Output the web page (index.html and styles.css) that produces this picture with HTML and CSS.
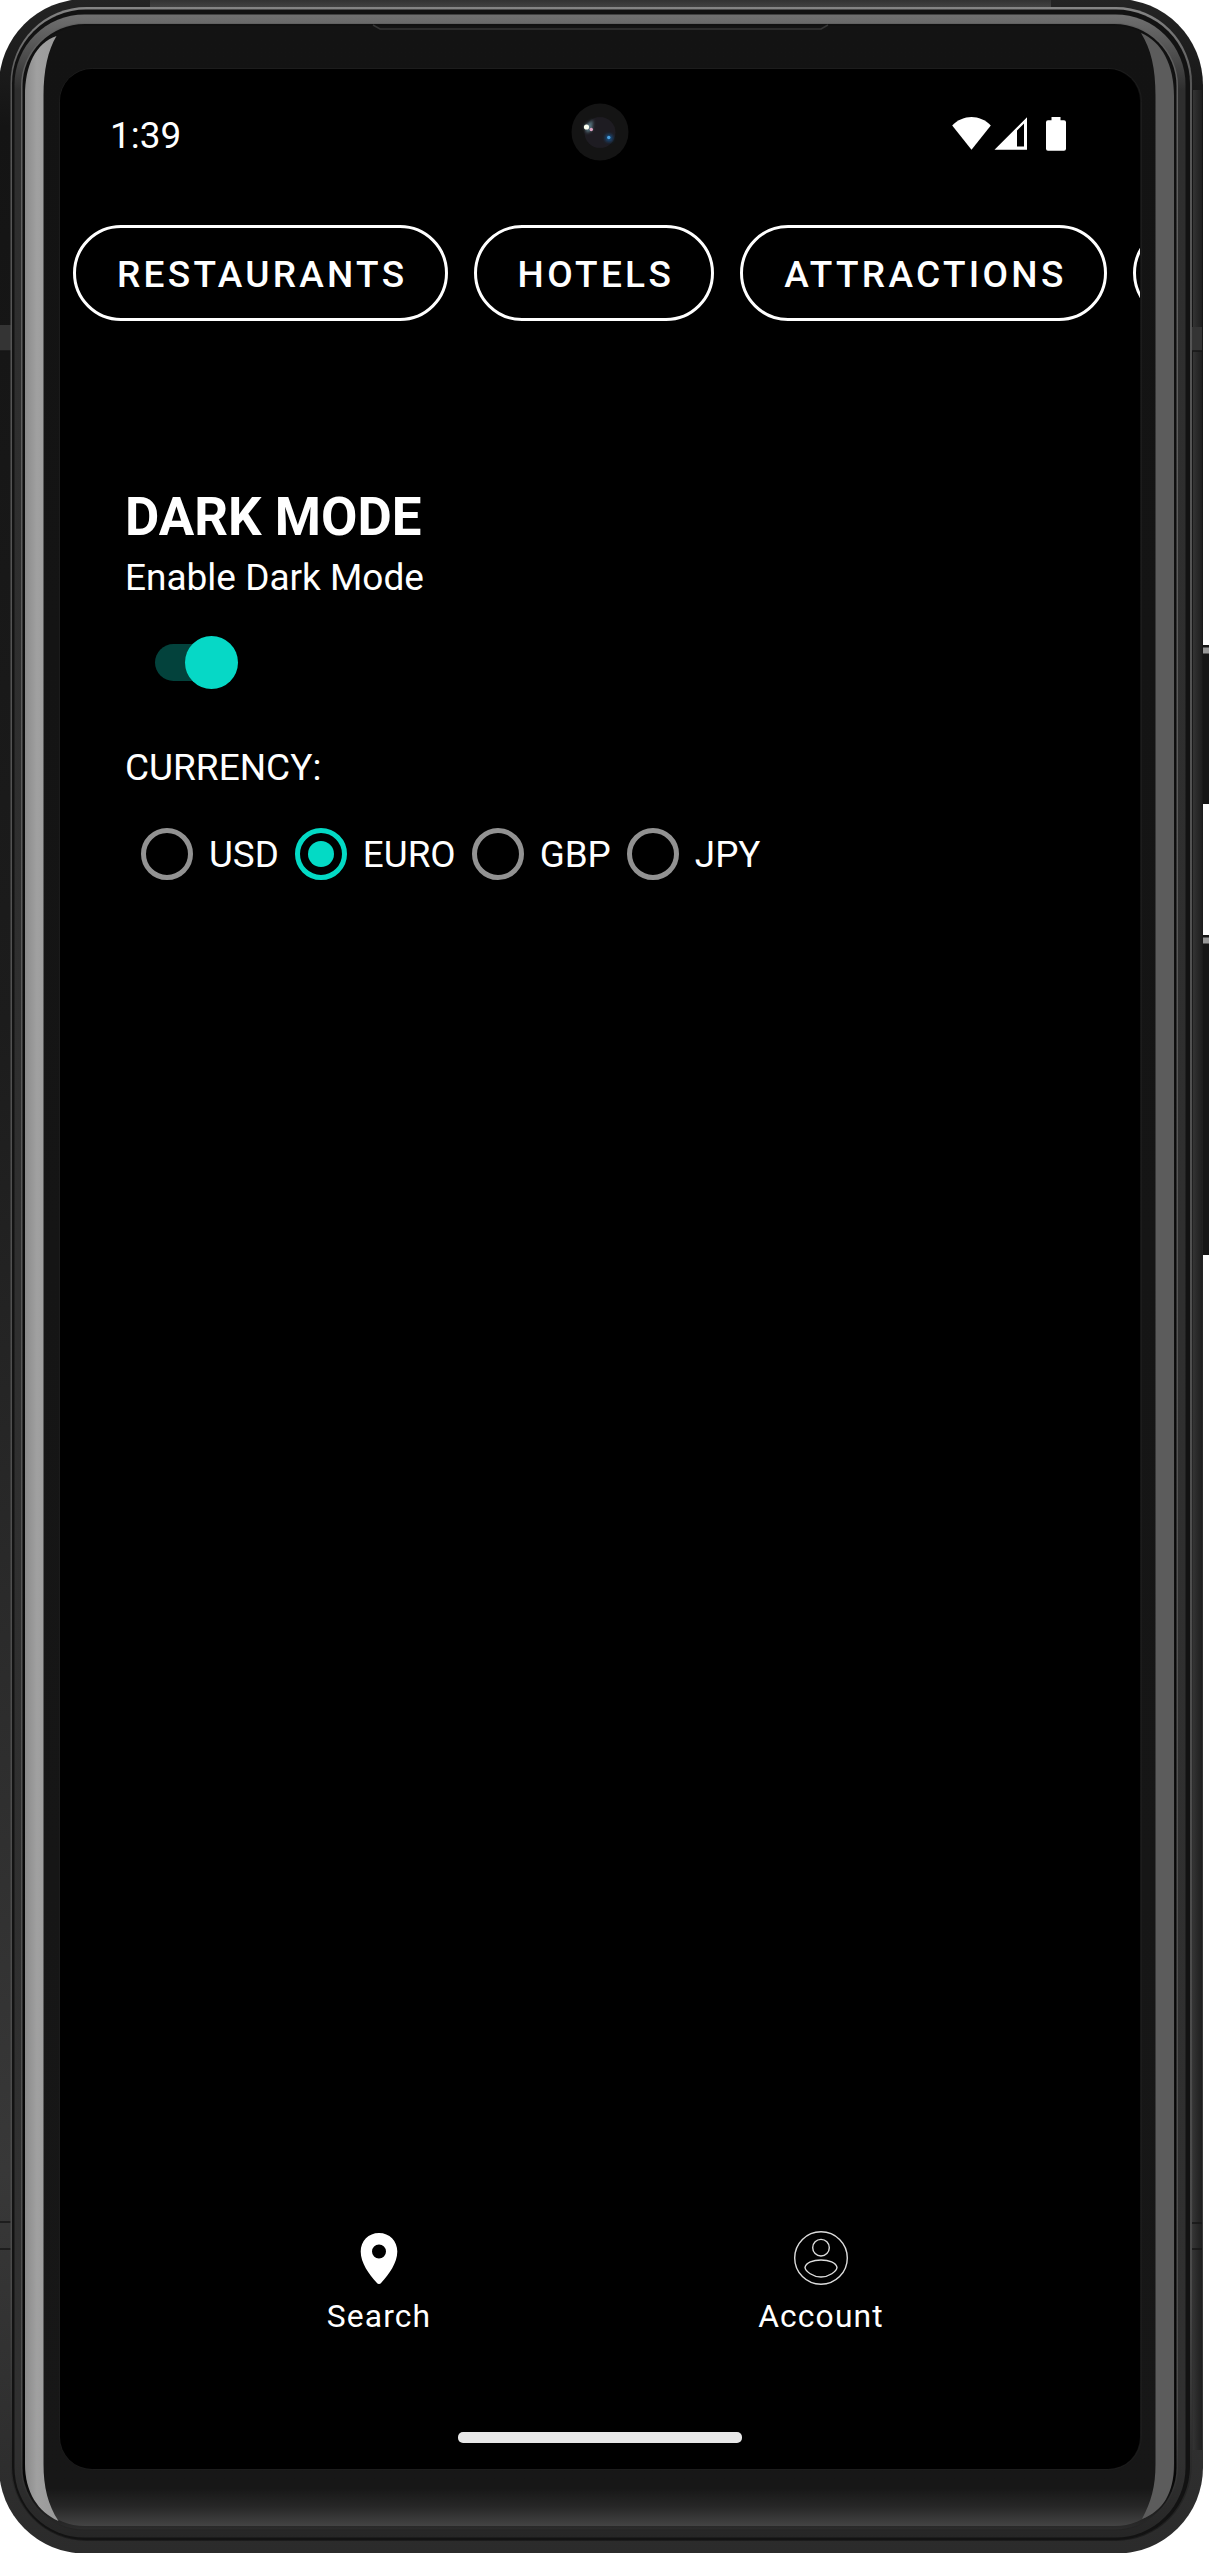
FILE: index.html
```html
<!DOCTYPE html>
<html lang="en">
<head>
<meta charset="utf-8">
<title>Settings</title>
<link rel="stylesheet" href="styles.css">
</head>
<body>
<div class="device">
  <svg class="frame" width="1209" height="2553" viewBox="0 0 1209 2553" aria-hidden="true">
    <defs>
      <linearGradient id="shell" x1="0" y1="0" x2="0" y2="1">
        <stop offset="0" stop-color="#242424"/><stop offset=".05" stop-color="#141414"/><stop offset=".4" stop-color="#1c1c1c"/><stop offset=".85" stop-color="#383838"/><stop offset="1" stop-color="#2b2b2b"/>
      </linearGradient>
      <linearGradient id="edge" x1="0" y1="0" x2="0" y2="1">
        <stop offset="0" stop-color="#858585"/><stop offset=".03" stop-color="#565656"/><stop offset=".9" stop-color="#4a4a4a"/><stop offset="1" stop-color="#1c1c1c"/>
      </linearGradient>
      <linearGradient id="band" x1="0" y1="0" x2="0" y2="1">
        <stop offset="0" stop-color="#707070"/><stop offset=".008" stop-color="#606060"/><stop offset=".03" stop-color="#2e2e2e"/><stop offset=".97" stop-color="#303030"/><stop offset="1" stop-color="#262626"/>
      </linearGradient>
      <linearGradient id="lip" x1="0" y1="0" x2="0" y2="1">
        <stop offset="0" stop-color="#606060"/><stop offset=".95" stop-color="#4c4c4c"/><stop offset="1" stop-color="#242424"/>
      </linearGradient>
      <linearGradient id="gap" x1="0" y1="0" x2="0" y2="1">
        <stop offset="0" stop-color="#101010"/><stop offset=".98" stop-color="#060606"/><stop offset="1" stop-color="#2c2c2c"/>
      </linearGradient>
      <linearGradient id="glass" x1="0" y1="0" x2="0" y2="1">
        <stop offset="0" stop-color="#131313"/><stop offset=".985" stop-color="#171717"/><stop offset=".992" stop-color="#262626"/><stop offset="1" stop-color="#444"/>
      </linearGradient>
      <linearGradient id="silver" x1="0" y1="0" x2="1" y2="0">
        <stop offset="0" stop-color="#8a8a8a"/><stop offset=".35" stop-color="#a0a0a0"/><stop offset="1" stop-color="#999"/>
      </linearGradient>
      <linearGradient id="rail" x1="0" y1="0" x2="1" y2="0">
        <stop offset="0" stop-color="#333"/><stop offset="1" stop-color="#1e1e1e"/>
      </linearGradient>
      <linearGradient id="topbar" x1="0" y1="0" x2="0" y2="1">
        <stop offset="0" stop-color="#333"/><stop offset="1" stop-color="#444"/>
      </linearGradient>
    </defs>
    <rect x="1200" y="645" width="12" height="159" fill="#161616"/>
    <rect x="1202" y="647.500" width="7" height="6" fill="#999"/>
    <rect x="1200" y="935" width="12" height="320" fill="#161616"/>
    <rect x="1202" y="937.500" width="7" height="6" fill="#999"/>
    <rect x="-1" y="-1" width="1204" height="2554.500" rx="86" fill="url(#shell)"/>
    <rect x="1193" y="90" width="9" height="2360" fill="url(#rail)"/>
    <rect x="150" y="0" width="901" height="8" fill="url(#topbar)"/>
    <path d="M0 325h11v26H0zM1190 327h12v24h-12z" fill="#343434"/>
    <path d="M0 351h11M1190 351h12M0 2222h11M0 2249h11M1190 2223h12M1190 2249h12" stroke="#161616" stroke-width="1.500"/>
    <rect x="10.500" y="7" width="1181.500" height="2534" rx="76" fill="url(#edge)"/>
    <rect x="12" y="9.500" width="1178" height="2530.500" rx="74" fill="#121212"/>
    <rect x="14.500" y="14.500" width="1171" height="2523" rx="70" fill="url(#band)"/>
    <rect x="21" y="23" width="1157" height="2507.500" rx="63" fill="url(#lip)"/>
    <rect x="22.500" y="24" width="1154" height="2505.500" rx="62" fill="url(#gap)"/>
    <rect x="25" y="26" width="1149.500" height="2500" rx="60" fill="url(#glass)"/>
    <path d="M56.500 36C36 43 25 65 25 96V2464C25 2492 38 2512 58.500 2521C48 2505 43.500 2487 43.500 2464V96C43.500 70 48 50 56.500 36Z" fill="url(#silver)"/>
    <path d="M1141 33C1162 42 1174 65 1174 96V2464C1174 2493 1163 2511 1142 2519C1151 2502 1155.500 2487 1155.500 2464V96C1155.500 68 1151 49 1141 33Z" fill="#5c5c5c"/>
    <path d="M373 25l7 4H821l7-4" fill="none" stroke="#343434" stroke-width="1.500"/>
    <rect x="59.500" y="68.500" width="1082" height="2401" rx="33" fill="none" stroke="#1c1c1c"/>
  </svg>

  <main class="screen">
    <header class="status">
      <span class="clock">1:39</span>
      <svg class="camera" width="58" height="58" viewBox="0 0 58 58" aria-hidden="true">
        <defs>
          <filter id="glow" x="-1" y="-1" width="3" height="3"><feGaussianBlur stdDeviation="1.700"/></filter>
        </defs>
        <circle cx="29" cy="29" r="28.500" fill="#141414"/>
        <circle cx="29" cy="29.500" r="15.500" fill="#1e1c22"/>
        <path d="M13 23L22 17L21 27L16 30Z" fill="#587580" filter="url(#glow)"/>
        <circle cx="38" cy="35" r="4" fill="#174570" filter="url(#glow)"/>
        <circle cx="15.500" cy="24" r="2.600" fill="#fbfff0"/>
        <circle cx="20.300" cy="26.500" r="1.700" fill="#e0a5c4"/>
        <circle cx="37.800" cy="34.500" r="1.700" fill="#4aa0e0"/>
      </svg>
      <svg class="indicators" width="116" height="36" viewBox="0 0 116 36" fill="#fff" aria-hidden="true">
        <path d="M.2 9.500C11-2 28-2 38.800 9.500L19.500 33.700Z"/>
        <path fill-rule="evenodd" d="M42.500 33.700L75 1.200V33.700ZM65 14.500V30.500H72V7.500Z"/>
        <path d="M99.500 1h9v3.300h3.500a2 2 0 0 1 2 2V32.700a2 2 0 0 1-2 2h-16a2 2 0 0 1-2-2V6.300a2 2 0 0 1 2-2h3.500z"/>
      </svg>
    </header>

    <nav class="chips">
      <button class="chip">RESTAURANTS</button>
      <button class="chip">HOTELS</button>
      <button class="chip">ATTRACTIONS</button>
      <button class="chip"></button>
    </nav>

    <section class="settings">
      <h1 class="title">DARK MODE</h1>
      <p class="label">Enable Dark Mode</p>
      <div class="switch"><span class="thumb"></span></div>
      <p class="label currency">CURRENCY:</p>
      <div class="options">
        <label class="option"><span class="radio"></span>USD</label>
        <label class="option"><span class="radio checked"></span>EURO</label>
        <label class="option"><span class="radio"></span>GBP</label>
        <label class="option"><span class="radio"></span>JPY</label>
      </div>
    </section>

    <nav class="tabs">
      <a class="tab">
        <svg width="56" height="56" viewBox="0 0 56 56" aria-hidden="true"><path fill="#fff" fill-rule="evenodd" d="M28 3C17.500 3 9.700 11 9.700 21.500C9.700 33 18 44 25.500 52.500Q28 55.500 30.500 52.500C38 44 46.300 33 46.300 21.500C46.300 11 38.500 3 28 3ZM28 14.500a7 7 0 1 1 0 14a7 7 0 0 1 0-14Z"/></svg>
        <span>Search</span>
      </a>
      <a class="tab">
        <svg width="56" height="56" viewBox="0 0 56 56" fill="none" stroke="#ddd" stroke-width="1.400" aria-hidden="true"><circle cx="28" cy="28" r="26.300"/><circle cx="28" cy="17.700" r="8.300"/><path d="M12 37.500C13 32.500 20 30 28 30S43 32.500 44 37.500C43.500 41.500 36 47 28 47S12.500 41.500 12 37.500Z"/></svg>
        <span>Account</span>
      </a>
    </nav>
    <div class="home"></div>
  </main>
</div>
</body>
</html>
```
FILE: styles.css
```css
* { box-sizing: border-box; }
body { margin: 0; background: #fff; font-family: Roboto, sans-serif; color: #fff; }
h1, p { margin: 0; font-weight: 400; }

.device { position: relative; width: 1209px; height: 2553px; padding: 69px 0 0 60px; overflow: hidden; }
.frame { position: absolute; left: 0; top: 0; }

.screen { position: relative; display: flex; flex-direction: column; width: 1080px; height: 2400px; border-radius: 32px; background: #000; overflow: hidden; }

.status { display: grid; grid-template-columns: 1fr 58px 1fr; align-items: center; height: 125px; padding: 0 72px 0 50px; flex: none; }
.clock { font-size: 36.9px; line-height: 44px; padding-top: 8px; }
.camera { position: relative; left: 11px; }
.indicators { justify-self: end; margin-top: 4px; }

.chips { display: flex; gap: 26px; margin-top: 31px; padding-left: 13px; flex: none; }
.chip { flex: none; height: 96px; min-width: 231px; padding: 2px 37.2px 0 41px; border: 3px solid #fff; border-radius: 48px; background: none; color: #fff; font: 500 37px Roboto, sans-serif; letter-spacing: 3.3px; white-space: nowrap; }

.settings { padding: 165px 65px 0; flex: 1; }
.title { font-size: 52.8px; line-height: 62px; font-weight: 700; }
.label { font-size: 37px; line-height: 43px; }
.title + .label { margin-top: 8px; }
.switch { width: 76px; height: 37px; margin: 45px 0 0 30px; padding-left: 30px; border-radius: 19px; background: #03423c; }
.thumb { display: block; width: 53px; height: 53px; border-radius: 50%; background: #06d8c6; transform: translateY(-8px); }
.currency { margin-top: 65px; }
.options { display: flex; height: 84px; margin-top: 23px; }
.option { display: flex; align-items: center; font-size: 36.8px; }
.radio { display: grid; place-items: center; width: 52px; height: 52px; margin: 0 16px; border: 5px solid #929292; border-radius: 50%; }
.checked { border-color: #03dac5; }
.checked::after { content: ""; width: 26px; height: 26px; border-radius: 50%; background: #03dac5; }

.tabs { display: grid; grid-template-columns: 442px 442px; justify-content: center; height: 202px; flex: none; }
.tab { display: flex; flex-direction: column; align-items: center; font-size: 31.8px; line-height: 38px; letter-spacing: 1.15px; }
.tab span { margin-top: 11px; }
.home { width: 284px; height: 11px; margin: 0 auto 26px; flex: none; border-radius: 5px; background: #e8e8e8; }
```
